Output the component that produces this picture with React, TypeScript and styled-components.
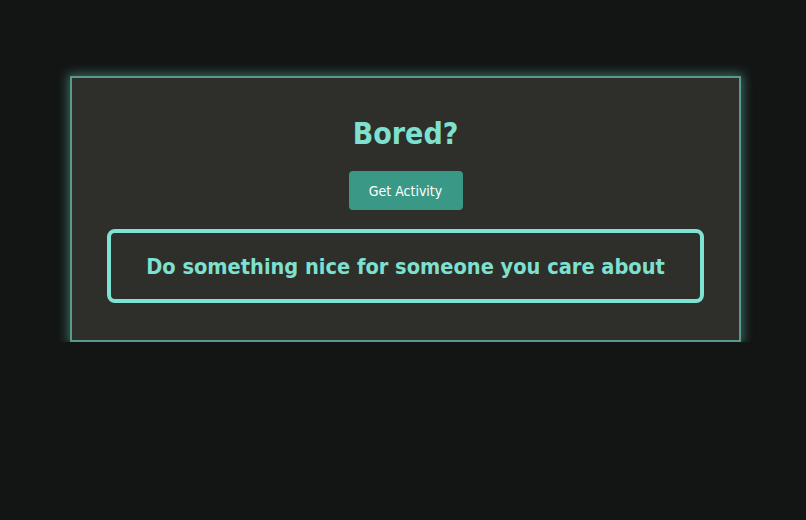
import React from 'react';
import styled, { createGlobalStyle } from 'styled-components';

const GlobalStyle = createGlobalStyle`
  html, body {
    margin: 0;
    padding: 0;
    background: #131515;
    font-family: 'DejaVu Sans Condensed', 'DejaVu Sans', Verdana, sans-serif;
  }
`;

const Page = styled.div`
  padding: 76px 65px 0 70px;
`;

const Card = styled.div`
  background: #2e2e2a;
  border: 2px solid #5a9a8e;
  box-shadow: 0 0 10px 2px rgba(110, 210, 190, 0.45);
  padding: 38px 35px 37px;
  display: flex;
  flex-direction: column;
  align-items: center;
`;

const Title = styled.h1`
  margin: 0;
  font-size: 30px;
  line-height: 36px;
  font-weight: bold;
  color: #7ee0cf;
`;

const Button = styled.button`
  margin-top: 19px;
  height: 39px;
  width: 114px;
  padding: 0;
  border: none;
  border-radius: 4px;
  background: #3a9887;
  color: #ffffff;
  font-family: inherit;
  font-size: 14px;
  cursor: pointer;
`;

const ActivityBox = styled.div`
  margin-top: 19px;
  align-self: stretch;
  height: 74px;
  box-sizing: border-box;
  border: 4px solid #7fe3d3;
  border-radius: 8px;
  display: flex;
  align-items: center;
  justify-content: center;
`;

const ActivityText = styled.h2`
  margin: 0;
  font-size: 21.6px;
  font-weight: bold;
  color: #7ee0cf;
`;

const App = () => {
  return (
    <>
      <GlobalStyle />
      <Page>
        <Card>
          <Title>Bored?</Title>
          <Button>Get Activity</Button>
          <ActivityBox>
            <ActivityText>Do something nice for someone you care about</ActivityText>
          </ActivityBox>
        </Card>
      </Page>
    </>
  );
};

export default App;
